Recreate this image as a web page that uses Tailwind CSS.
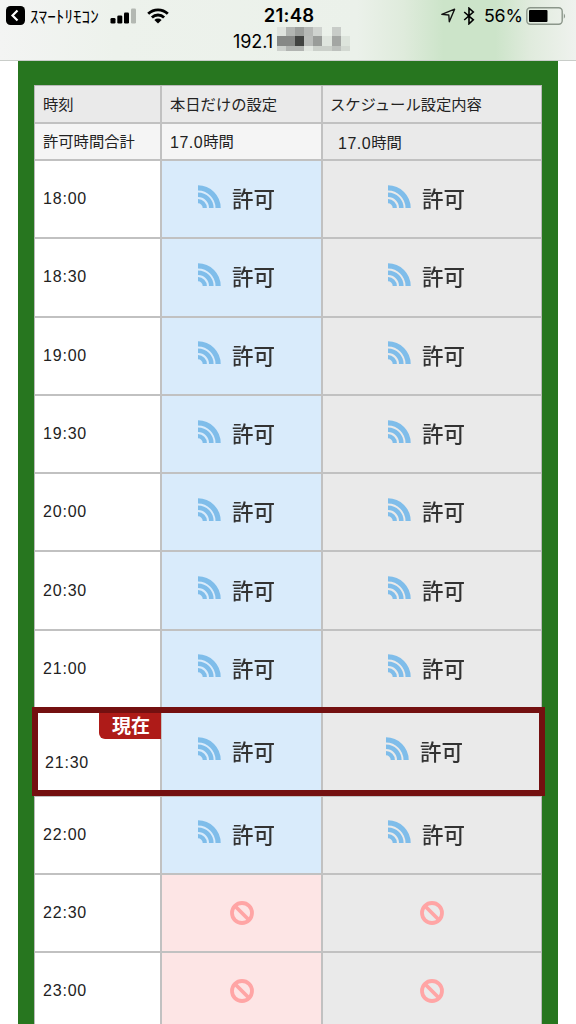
<!DOCTYPE html>
<html lang="ja">
<head>
  <meta charset="UTF-8">
  <meta name="viewport" content="width=device-width, initial-scale=1">
  <title>スケジュール設定</title>
  <script src="https://cdn.jsdelivr.net/npm/@tailwindcss/browser@4"></script>
</head>
<body class="h-screen overflow-hidden bg-white font-['Inter','Noto_Sans_CJK_JP',sans-serif] text-[#222]">
  <!-- アイコン定義 -->
  <svg class="hidden">
    <symbol id="signal" viewBox="0 0 23 23">
      <g fill="none" stroke="#7fbdea">
        <path d="M0 16.2A6.8 6.8 0 0 1 6.8 23" stroke-width="4.2" />
        <path d="M0 9.7A13.3 13.3 0 0 1 13.3 23" stroke-width="4.6" />
        <path d="M0 2.9A20.1 20.1 0 0 1 20.1 23" stroke-width="5.2" />
      </g>
    </symbol>
    <symbol id="deny" viewBox="0 0 24 24">
      <g fill="none" stroke="#ffa5a5" stroke-width="3.8">
        <circle cx="12" cy="12" r="10" />
        <path d="M5 5L19 19" />
      </g>
    </symbol>
  </svg>

  <!-- ステータスバー -->
  <header class="flex h-[61px] flex-col border-b border-[#c9cdc9] bg-[linear-gradient(90deg,#f3f4f3_0%,#edf2ec_20%,#ebf1ea_62%,#dfebdc_70%,#cce4c9_77%,#cce4c9_86%,#e0ebdd_92%,#eff2ee_100%)] text-black">
    <div class="grid h-[31px] grid-cols-[1fr_auto_1fr] items-center">
      <div class="flex items-center pl-1.5">
        <svg class="h-[19px] w-[19px]" viewBox="0 0 19 19">
          <rect width="19" height="19" rx="4.5" />
          <path d="M11.5 4.5L6.5 9.5L11.5 14.5" fill="none" stroke="#fff" stroke-width="2.2" />
        </svg>
        <span class="ml-[5px] w-[70px] whitespace-nowrap font-['Noto_Sans_CJK_JP',sans-serif] text-[17.2px] leading-none">ｽﾏｰﾄﾘﾓｺﾝ</span>
        <svg class="ml-2.5 h-4 w-[27px]" viewBox="0 0 27 16">
          <rect x="0.5" y="10" width="5" height="5.5" rx="1.3" />
          <rect x="7.3" y="7.5" width="5" height="8" rx="1.3" />
          <rect x="14" y="4.5" width="5" height="11" rx="1.3" />
          <rect x="21" y="0.5" width="5" height="15" rx="1.3" fill="#b3b8b2" />
        </svg>
        <svg class="ml-2.5 h-4 w-[22px]" viewBox="0 0 22 16">
          <g fill="none" stroke="#000" stroke-width="2.8">
            <path d="M1.2 5.8A14 14 0 0 1 20.8 5.8" />
            <path d="M4.9 9.5A8.7 8.7 0 0 1 17.1 9.5" />
          </g>
          <path d="M7.4 12A5.1 5.1 0 0 1 14.6 12L11 15.6Z" />
        </svg>
      </div>
      <div class="pl-0.5 text-[18.5px] font-semibold leading-none tracking-[0.2px]">21:48</div>
      <div class="flex items-center justify-end pr-[9px]">
        <svg class="h-[15px] w-[15px]" viewBox="0 0 15 15">
          <path d="M0.8 6.4L13.6 1.2L8.3 13.8L7.8 7Z" fill="none" stroke="#111" stroke-width="1.4" stroke-linejoin="round" />
        </svg>
        <svg class="ml-[7px] h-[18px] w-3" viewBox="0 0 12 18">
          <path d="M1.2 5L10.3 12.8L6 16.8V1.2L10.3 5L1.2 13" fill="none" stroke="#000" stroke-width="1.6" />
        </svg>
        <span class="ml-[9px] w-[39px] whitespace-nowrap text-[17.8px] leading-none tracking-[-0.2px]">56%</span>
        <svg class="ml-[3px] h-[18px] w-[41px]" viewBox="0 0 41 18">
          <rect x="0.8" y="0.8" width="35.4" height="16.4" rx="3.5" fill="none" stroke="#8b968a" stroke-width="1.4" />
          <rect x="3" y="3" width="18.5" height="12" rx="1" />
          <path d="M37.8 6.2Q40.4 9 37.8 11.8Z" fill="#8b968a" />
        </svg>
      </div>
    </div>
    <div class="flex pl-[233px]">
      <span class="mt-0.5 w-[44px] whitespace-nowrap text-[18px] leading-[18px] tracking-[-0.1px]">192.1</span>
      <svg class="-mt-1 h-6 w-[73px]" viewBox="0 0 73 24" shape-rendering="crispEdges">
        <rect x="0" y="0" width="9" height="9" fill="#dfe3de" />
        <rect x="9" y="0" width="9" height="9" fill="#b2b5b2" />
        <rect x="18" y="0" width="9" height="9" fill="#9c9f9c" />
        <rect x="27" y="0" width="9" height="9" fill="#b6b9b6" />
        <rect x="36" y="0" width="9" height="9" fill="#cfd3cf" />
        <rect x="55" y="0" width="9" height="9" fill="#c8ccc8" />
        <rect x="0" y="9" width="18" height="10" fill="#868886" />
        <rect x="18" y="9" width="9" height="10" fill="#414341" />
        <rect x="27" y="9" width="9" height="10" fill="#b9bcb9" />
        <rect x="36" y="9" width="9" height="10" fill="#999c99" />
        <rect x="45" y="9" width="10" height="10" fill="#dfe5de" />
        <rect x="55" y="9" width="9" height="10" fill="#a3a6a3" />
        <rect x="64" y="9" width="9" height="10" fill="#dde4dc" />
        <rect x="0" y="19" width="9" height="5" fill="#ccd0cc" />
        <rect x="9" y="19" width="18" height="5" fill="#b1b4b1" />
        <rect x="27" y="19" width="9" height="5" fill="#e2e7e1" />
        <rect x="36" y="19" width="19" height="5" fill="#cbd0ca" />
        <rect x="55" y="19" width="9" height="5" fill="#bdc1bd" />
        <rect x="64" y="19" width="9" height="5" fill="#d3d9d2" />
      </svg>
    </div>
  </header>

  <!-- スケジュール表 -->
  <main class="ml-[18px] h-[963px] w-[539.5px] bg-[#27761f] pl-4 pt-6 text-[15.3px]">
    <div class="w-[508px] border border-b-0 border-[#b9b9b9]">
      <div class="grid h-[38px] grid-cols-[127px_161px_218px] border-b-2 border-[#c1c1c1] bg-[#eaeaea]">
        <div class="flex items-center border-r-2 border-[#c1c1c1] pl-2 pt-0.5">時刻</div>
        <div class="flex items-center border-r-2 border-[#c1c1c1] pl-2 pt-0.5">本日だけの設定</div>
        <div class="flex items-center whitespace-nowrap pl-[7px] pt-0.5">スケジュール設定内容</div>
      </div>
      <div class="grid h-[37px] grid-cols-[127px_161px_218px] border-b-2 border-[#c1c1c1] bg-[#f5f5f5]">
        <div class="flex items-center border-r-2 border-[#c1c1c1] pl-2 pt-0.5">許可時間合計</div>
        <div class="flex items-center border-r-2 border-[#c1c1c1] pl-2 pt-0.5"><span class="font-['Liberation_Sans',sans-serif] text-base tracking-[0.5px]">17.0</span>時間</div>
        <div class="flex items-center bg-[#eaeaea] pl-[15px] pt-1"><span class="font-['Liberation_Sans',sans-serif] text-base tracking-[0.5px]">17.0</span>時間</div>
      </div>
      <div id="rows"></div>
    </div>
  </main>

  <script>
    const slots = [
      ['18:00', true], ['18:30', true], ['19:00', true], ['19:30', true],
      ['20:00', true], ['20:30', true], ['21:00', true], ['21:30', true, true],
      ['22:00', true], ['22:30', false], ['23:00', false],
    ];

    const allow = `
      <svg class="h-[23px] w-[23px] blur-[0.5px]"><use href="#signal" /></svg>
      <span class="ml-[11px] mt-1 font-['Noto_Sans_CJK_JP',sans-serif] text-[21.5px] font-medium leading-6 text-[#333] blur-[0.5px]">許可</span>`;
    const deny = `<svg class="h-6 w-6"><use href="#deny" /></svg>`;

    document.getElementById('rows').innerHTML = slots.map(([time, ok, now]) => `
      <div class="relative grid grid-cols-[127px_161px_218px] border-b-2 border-[#c1c1c1] ${now ? 'h-[87.5px]' : 'h-[78.3px]'}">
        <div class="flex items-center border-r-2 border-[#c1c1c1] bg-white font-['Liberation_Sans',sans-serif] text-base tracking-[0.8px] ${now ? 'pl-2.5 pt-[22px]' : 'pl-2'}">${time}</div>
        <div class="flex items-center border-r-2 border-[#c1c1c1] ${ok ? 'bg-[#d9ebfb] pb-1.5 pl-9' : 'bg-[#fde5e5] pl-[68px]'}">${ok ? allow : deny}</div>
        <div class="flex items-center bg-[#eaeaea] ${ok ? (now ? 'pb-1.5 pl-[63px]' : 'pb-1.5 pl-[65px]') : 'pl-[97px]'}">${ok ? allow : deny}</div>
        ${now ? `
        <div class="absolute left-16 top-[3px] flex h-[27px] w-[62px] items-center justify-center rounded-bl-md bg-[#ae1b18] pb-0.5 pl-0.5 font-['Noto_Sans_CJK_JP',sans-serif] text-[19px] font-bold leading-none text-white">現在</div>
        <div class="absolute -left-[3px] -top-0.5 z-10 h-[89px] w-[513px] border-6 border-[#741010]"></div>` : ''}
      </div>`).join('');
  </script>
</body>
</html>
